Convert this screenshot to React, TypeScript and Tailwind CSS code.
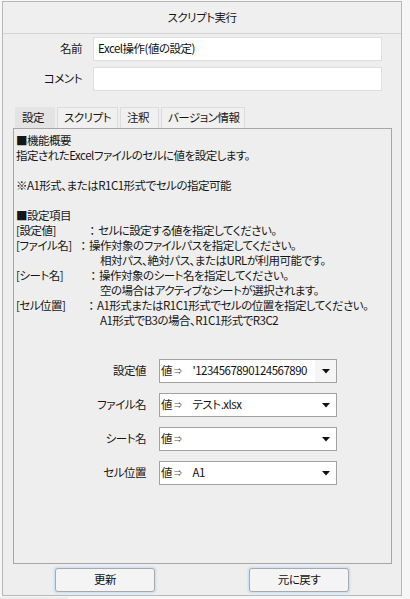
import React from "react";

const FONT =
  "font-['Noto_Sans_CJK_JP',sans-serif] [font-feature-settings:'palt'_1] [font-kerning:normal]";

function Arrow() {
  return (
    <svg width="8" height="5" viewBox="0 0 8 5">
      <path d="M0 0 H8 L4 4.5 Z" fill="#111" />
    </svg>
  );
}

function Combo({ label, value, grey }: { label: string; value: string; grey?: boolean }) {
  return (
    <div className="flex items-center h-[24px]">
      <div className="w-[143px] text-right pr-[13px] whitespace-nowrap">{label}</div>
      <div className="w-[178px] h-[24px] border border-[#a2a2a2] bg-white flex items-center overflow-hidden">
        <div className="flex-1 flex items-center overflow-hidden whitespace-nowrap">
          <span className="pl-[1px] text-[#222]">値</span>
          <span className="ml-[2px] text-[8px] text-[#555]">⇒</span>
          <span className="ml-[11px] text-[#111]">{value}</span>
        </div>
        <div className={`w-[21px] h-full flex items-center justify-center shrink-0 ${grey ? "bg-[#f5f5f5]" : "bg-white"}`}>
          <Arrow />
        </div>
      </div>
    </div>
  );
}

function Item({ label, w, children }: { label: string; w: string; children: React.ReactNode }) {
  return (
    <div className="flex">
      <span className={`inline-block ${w}`}>{label}</span>
      <span className="inline-block w-[12px] text-center">：</span>
      <span>{children}</span>
    </div>
  );
}

export default function App() {
  return (
    <div className={`w-[410px] h-[599px] bg-[#f6f6f6] relative text-[11.5px] tracking-[-0.5px] text-[#161616] ${FONT}`}>
      <div className="absolute left-0 top-[597px] w-[68px] h-[2px] bg-[#ececec]" />
      <div className="absolute left-[2px] top-[1px] w-[400px] h-[595px] border border-[#b8b8b8] bg-[#eeeeee] flex flex-col">
        {/* header */}
        <div className="h-[32px] border-b border-[#d2d2d2] bg-[#efefef] flex items-center justify-center shrink-0">
          スクリプト実行
        </div>

        {/* name / comment */}
        <div className="mt-[3px] flex flex-col gap-[6px]">
          <div className="flex items-center">
            <div className="w-[79px] text-right">名前</div>
            <div className="ml-[11px] w-[289px] h-[24px] border border-[#dedede] bg-white flex items-center pl-[4px] text-[#111]">
              Excel操作(値の設定)
            </div>
          </div>
          <div className="flex items-center">
            <div className="w-[79px] text-right">コメント</div>
            <div className="ml-[11px] w-[289px] h-[24px] border border-[#dedede] bg-white" />
          </div>
        </div>

        {/* tabs */}
        <div className="mt-[16px] ml-[12px] flex items-end h-[21px] whitespace-nowrap">
          <div className="w-[40px] h-[21px] bg-[#e3e3e3] flex items-center pl-[7px]">設定</div>
          <div className="ml-[2px] w-[61px] h-[21px] bg-[#f0f0f0] border border-b-0 border-[#dcdcdc] flex items-center pl-[6px]">スクリプト</div>
          <div className="ml-[2px] w-[39px] h-[21px] bg-[#f0f0f0] border border-b-0 border-[#dcdcdc] flex items-center pl-[6px]">注釈</div>
          <div className="ml-[2px] w-[84px] h-[21px] bg-[#f0f0f0] border border-b-0 border-[#dcdcdc] flex items-center pl-[6px]">バージョン情報</div>
        </div>

        {/* panel */}
        <div className="ml-[10px] w-[379px] h-[436px] border border-[#a6a6a6] bg-[#eeeeee] pt-[4px] pl-[2px] flex flex-col">
          <div className="leading-[15px] whitespace-nowrap">
            <div>■機能概要</div>
            <div>指定されたExcelファイルのセルに値を設定します。</div>
            <div>&nbsp;</div>
            <div>※A1形式、またはR1C1形式でセルの指定可能</div>
            <div>&nbsp;</div>
            <div>■設定項目</div>
            <Item label="[設定値]" w="w-[70px]">セルに設定する値を指定してください。</Item>
            <Item label="[ファイル名]" w="w-[61px]">操作対象のファイルパスを指定してください。</Item>
            <div className="pl-[84px]">相対パス、絶対パス、またはURLが利用可能です。</div>
            <Item label="[シート名]" w="w-[71px]">操作対象のシート名を指定してください。</Item>
            <div className="pl-[84px]">空の場合はアクティブなシートが選択されます。</div>
            <Item label="[セル位置]" w="w-[69px]">A1形式またはR1C1形式でセルの位置を指定してください。</Item>
            <div className="pl-[84px]">A1形式でB3の場合、R1C1形式でR3C2</div>
          </div>

          <div className="mt-[31px] flex flex-col gap-[10px]">
            <Combo label="設定値" value="'1234567890124567890" grey />
            <Combo label="ファイル名" value="テスト.xlsx" />
            <Combo label="シート名" value="" />
            <Combo label="セル位置" value="A1" />
          </div>
        </div>

        {/* buttons */}
        <div className="mt-[4px] flex">
          <button className="ml-[52px] w-[100px] h-[24px] rounded-[3px] border border-[#a9a9a9] bg-[#f4f4f4] shadow-[0_0_0_1px_#cfe3f7,0_0_2px_1px_#bcd6f2] text-[#111]">
            更新
          </button>
          <button className="ml-[94px] w-[100px] h-[24px] rounded-[3px] border border-[#a9a9a9] bg-[#f4f4f4] shadow-[0_0_0_1px_#cfe3f7,0_0_2px_1px_#bcd6f2] text-[#111]">
            元に戻す
          </button>
        </div>
      </div>
    </div>
  );
}
